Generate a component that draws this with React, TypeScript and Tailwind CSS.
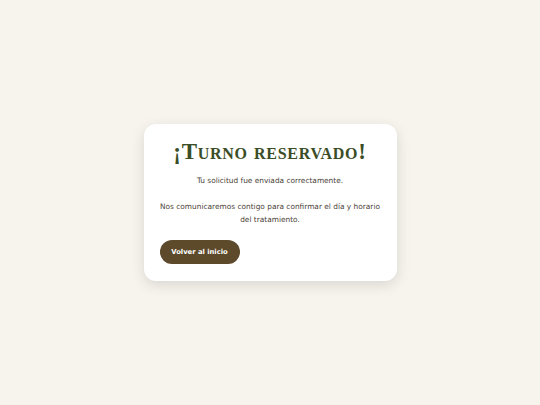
export default function App() {
  return (
    <div className="min-h-screen w-full bg-[#f7f4ee] flex items-center justify-center">
      <div className="w-[253px] bg-white rounded-xl shadow-[0_4px_14px_rgba(0,0,0,0.12)] px-4 pt-[17px] pb-[17px]">
        <h1
          className="text-center text-[#3b4d26] text-[23px] leading-[22px] font-bold tracking-[0.7px] [font-variant:small-caps]"
          style={{ fontFamily: '"Liberation Serif", serif' }}
        >
          ¡Turno reservado!
        </h1>
        <div
          className="text-center text-[#4a4237] text-[7.4px] leading-[13px] mt-[11px] -mx-1"
          style={{ fontFamily: '"DejaVu Sans", sans-serif' }}
        >
          <p>Tu solicitud fue enviada correctamente.</p>
          <p className="mt-[13px]">
            Nos comunicaremos contigo para confirmar el día y horario del tratamiento.
          </p>
        </div>
        <button
          className="mt-[14px] w-[80px] h-[24px] rounded-full bg-[#5c4a2b] text-white text-[6.8px] font-bold"
          style={{ fontFamily: '"DejaVu Sans", sans-serif' }}
        >
          Volver al inicio
        </button>
      </div>
    </div>
  );
}
